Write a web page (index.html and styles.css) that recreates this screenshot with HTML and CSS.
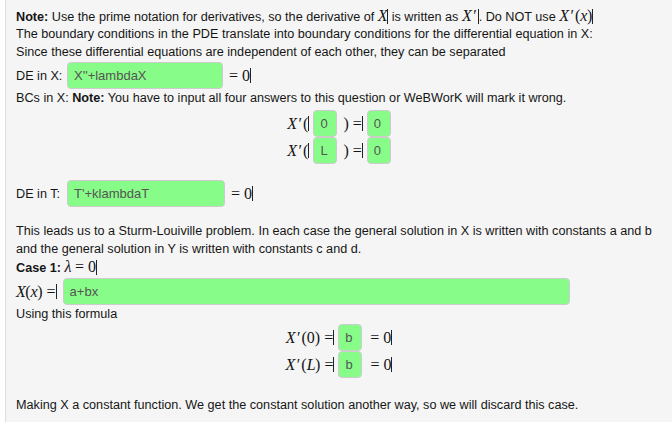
FILE: index.html
```html
<!DOCTYPE html>
<html>
<head>
<meta charset="utf-8">
<link rel="stylesheet" href="styles.css">
</head>
<body>
<div class="page">
  <div class="line"><b>Note:</b> Use the prime notation for derivatives, so the derivative of <span class="m"><i>X</i></span><span class="caret"></span> is written as <span class="m"><i>X</i><span class="pr">′</span></span><span class="caret"></span>. Do NOT use <span class="m"><i>X</i><span class="pr">′</span>(<i>x</i>)</span><span class="caret"></span></div>
  <div class="line">The boundary conditions in the PDE translate into boundary conditions for the differential equation in X:</div>
  <div class="line">Since these differential equations are independent of each other, they can be separated</div>
  <div class="row de">
    <span class="lbl">DE in X:</span>
    <span class="inp w156">X''+lambdaX</span>
    <span class="m eq">= 0</span><span class="caret"></span>
  </div>
  <div class="line">BCs in X: <b>Note:</b> You have to input all four answers to this question or WeBWorK will mark it wrong.</div>
  <div class="center bc">
    <div class="row"><span class="m"><i>X</i><span class="pr">′</span>(</span><span class="caret"></span><span class="inp w24">0</span><span class="m gap">) =</span><span class="caret"></span><span class="inp w24">0</span></div>
    <div class="row"><span class="m"><i>X</i><span class="pr">′</span>(</span><span class="caret"></span><span class="inp w24">L</span><span class="m gap">) =</span><span class="caret"></span><span class="inp w24">0</span></div>
  </div>
  <div class="row det">
    <span class="lbl">DE in T:</span>
    <span class="inp w158">T'+klambdaT</span>
    <span class="m eq">= 0</span><span class="caret"></span>
  </div>
  <div class="line sp">This leads us to a Sturm-Louiville problem. In each case the general solution in X is written with constants a and b</div>
  <div class="line">and the general solution in Y is written with constants c and d.</div>
  <div class="line"><b>Case 1:</b> <span class="m"><i>λ</i> = 0</span><span class="caret"></span></div>
  <div class="row xx">
    <span class="m"><i>X</i>(<i>x</i>) =</span><span class="caret"></span>
    <span class="inp w506">a+bx</span>
  </div>
  <div class="line">Using this formula</div>
  <div class="center bc2">
    <div class="row"><span class="m"><i>X</i><span class="pr">′</span>(0) =</span><span class="caret"></span><span class="inp w24">b</span><span class="m eq2">= 0</span><span class="caret"></span></div>
    <div class="row"><span class="m"><i>X</i><span class="pr">′</span>(<i>L</i>) =</span><span class="caret"></span><span class="inp w24">b</span><span class="m eq2">= 0</span><span class="caret"></span></div>
  </div>
  <div class="line last">Making X a constant function. We get the constant solution another way, so we will discard this case.</div>
</div>
</body>
</html>
```
FILE: styles.css
```css
html, body {
  margin: 0;
  padding: 0;
  background: #ffffff;
}
.page {
  margin-left: 5px;
  border-left: 1px solid #dddddd;
  background: #f5f5f5;
  min-height: 422px;
  box-sizing: border-box;
  padding: 7px 10px 0 10px;
  font-family: "Liberation Sans", Arial, sans-serif;
  font-size: 12.65px;
  color: #151515;
}
.line {
  line-height: 18px;
  height: 18px;
  white-space: nowrap;
}
.m {
  font-family: "Liberation Serif", "Times New Roman", serif;
  font-size: 16px;
}
.m i { letter-spacing: -0.5px; }
.pr {
  display: inline-block;
  margin-left: 2px;
  margin-right: 1px;
}
.caret {
  display: inline-block;
  width: 1px;
  height: 15px;
  background: #222;
  vertical-align: -3px;
}
.row {
  display: flex;
  align-items: center;
  white-space: nowrap;
}
.inp {
  display: inline-block;
  box-sizing: border-box;
  height: 27px;
  line-height: 25px;
  background: #88fc88;
  border: 1px solid #cccccc;
  border-radius: 4px;
  padding: 0 6px;
  color: #555555;
  font-size: 13px;
  font-family: "Liberation Sans", Arial, sans-serif;
  margin-left: 4px;
}
.w156 { width: 156px; }
.w158 { width: 158px; }
.w24 { width: 24px; }
.w506 { width: 507px; margin-left: 6px; }
.lbl { width: 47px; }
.de { margin-top: 1px; height: 27px; }
.det { margin-top: 16px; height: 27px; }
.eq { margin-left: 6px; }
.eq2 { margin-left: 8px; }
.gap { margin-left: 6px; }
.center {
  display: flex;
  flex-direction: column;
  align-items: center;
}
.bc { margin-top: 3px; }
.bc2 { margin-top: 1px; }
.sp { margin-top: 15px; }
.xx { height: 27px; margin-top: 2px; }
.last { margin-top: 18px; }
```
